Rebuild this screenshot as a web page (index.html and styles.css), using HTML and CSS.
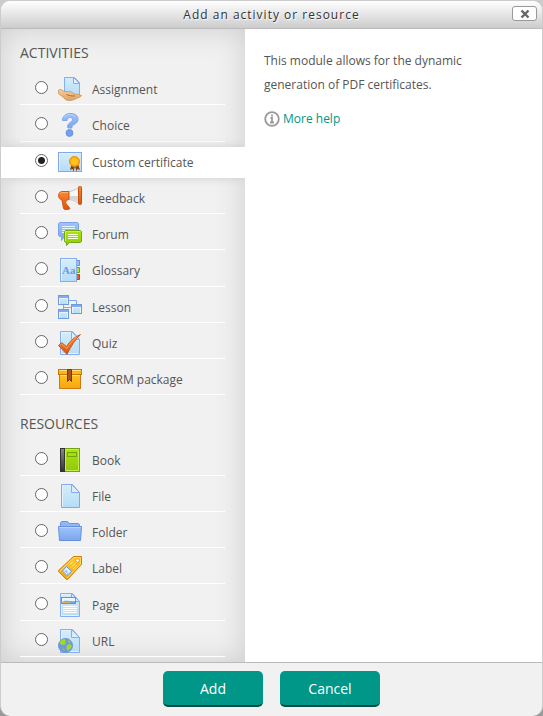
FILE: index.html
```html
<!DOCTYPE html>
<html lang="en">
<head>
  <meta charset="UTF-8">
  <meta name="viewport" content="width=device-width, initial-scale=1.0">
  <title>Add an activity or resource</title>
  <link rel="stylesheet" href="styles.css">
</head>
<body>
  <!-- Shared gradients and the sheet of paper used by several icons -->
  <svg class="defs" aria-hidden="true">
    <defs>
      <linearGradient id="paper" x1="0" y1="0" x2="0" y2="1">
        <stop offset="0" stop-color="#d6edfa"/><stop offset="1" stop-color="#b5dcf7"/>
      </linearGradient>
      <linearGradient id="blue" x1="0" y1="0" x2="0" y2="1">
        <stop offset="0" stop-color="#9fc4fa"/><stop offset="1" stop-color="#7ca5ee"/>
      </linearGradient>
      <linearGradient id="orange" x1="0" y1="0" x2="0" y2="1">
        <stop offset="0" stop-color="#f98a35"/><stop offset="1" stop-color="#d9540c"/>
      </linearGradient>
      <linearGradient id="yellow" x1="0" y1="0" x2="0" y2="1">
        <stop offset="0" stop-color="#ffc61c"/><stop offset="1" stop-color="#f8a510"/>
      </linearGradient>
      <linearGradient id="green" x1="0" y1="0" x2="0" y2="1">
        <stop offset="0" stop-color="#b1e30d"/><stop offset="1" stop-color="#8fc80e"/>
      </linearGradient>
      <linearGradient id="skin" x1="0" y1="0" x2="0" y2="1">
        <stop offset="0" stop-color="#f5cf9c"/><stop offset="1" stop-color="#dfa064"/>
      </linearGradient>
      <linearGradient id="spine" x1="0" y1="0" x2="0" y2="1">
        <stop offset="0" stop-color="#888"/><stop offset="1" stop-color="#333"/>
      </linearGradient>
      <g id="sheet">
        <path d="M2.5.5h12l7 8v15h-19z" fill="url(#paper)" stroke="#85adf0"/>
        <path d="M3.5 1.5h10M3.5 1.5v21h17" fill="none" stroke="#e2f3fd"/>
        <path d="M13.5.5v8h8z" fill="#d9edfc" stroke="#85adf0"/>
      </g>
    </defs>
  </svg>

  <div class="dialog" role="dialog" aria-labelledby="dialog-title">
    <header class="dialog-header">
      <h1 id="dialog-title">Add an activity or resource</h1>
      <button type="button" class="close" aria-label="Close">
        <svg width="10" height="10" viewBox="0 0 10 10"><path d="M1.5 1.5l7 7M8.5 1.5l-7 7" stroke="#666" stroke-width="2.4"/></svg>
      </button>
    </header>

    <form class="chooser">
      <div class="columns">
        <div class="options">
          <h2>ACTIVITIES</h2>
          <label class="option">
            <input type="radio" name="module">
            <svg class="icon" viewBox="0 0 24 24">
              <path d="M6.5.5h10l5 5v13h-15z" fill="url(#paper)" stroke="#85adf0"/>
              <path d="M15.5.5v6h6z" fill="#e4f3fd" stroke="#85adf0"/>
              <path d="M.5 13c1-1 3-.5 5 1 1.500 1 3 .5 5 .5 3 0 4 1 5.500 2.500 2.500.3 3.500 0 7.500 1.500-1 2-3.500 2-5 3-3 1.500-5 2-7.500 2s-4-1-5-2.500-3-2-5.500-4.500z" fill="url(#skin)" stroke="#c98b4c" stroke-width=".7"/>
              <path d="M8.500 17.500c3 1.500 5.500 1.500 8.500 1.500" fill="none" stroke="#a86d35"/>
            </svg>
            <span>Assignment</span>
          </label>
          <label class="option">
            <input type="radio" name="module">
            <svg class="icon" viewBox="0 0 24 24">
              <path d="M4.500 7.500C4.500 3 8 .5 12.500.5s7.500 2 7.500 6c0 5-7.500 5-6 8.500h-4c-2-5 4.500-5.500 4.500-8.500 0-3-5-3-5.500 1z" fill="url(#blue)" stroke="#7fa6ea"/>
              <path d="M6 4.500c2-3.500 9.500-4 11.500-.5" fill="none" stroke="#bdd6fb"/>
              <circle cx="11.500" cy="20" r="3.400" fill="#779fee" stroke="#6890e0"/>
            </svg>
            <span>Choice</span>
          </label>
          <label class="option">
            <input type="radio" name="module" checked>
            <svg class="icon" viewBox="0 0 24 24">
              <rect x=".5" y="2.500" width="23" height="19" fill="url(#paper)" stroke="#7fa8ee"/>
              <path d="M1.500 20.500v-17h21" fill="none" stroke="#e0f2fd"/>
              <path d="M13.500 14l-1.500 6 2.500-1 1 2.500 1.500-5 1.500 5 1-2.500 2.500 1-2-6z" fill="#8a4212"/>
              <circle cx="16.500" cy="11.500" r="5" fill="#f8a914" stroke="#e8900c"/>
              <circle cx="16.500" cy="11.500" r="3.500" fill="#ffc31b"/>
            </svg>
            <span>Custom certificate</span>
          </label>
          <label class="option">
            <input type="radio" name="module">
            <svg class="icon" viewBox="0 0 24 24">
              <path d="M10 5.500c4 0 7-1.500 10.500-4v16C17 14.500 14 13.500 10 13.500z" fill="#f8f8f8" stroke="#c4c4c4"/>
              <path d="M11 10h9v6c-3-2-5-3-9-3z" fill="#d6d6d6"/>
              <path d="M3.500 5.500H11v8c-3 .5-3.500 2-3 4l4 5c-1 1.500-6 1.500-6.500 0L4 14C-.5 13-.5 6.500 3.500 5.500z" fill="url(#orange)" stroke="#d2560f"/>
              <path d="M2 8c.5-1.500 1.500-1.500 3-1.500h5" fill="none" stroke="#ffb071"/>
              <rect x="20.500" y=".5" width="3" height="18" rx="1" fill="url(#orange)" stroke="#c9500d"/>
            </svg>
            <span>Feedback</span>
          </label>
          <label class="option">
            <input type="radio" name="module">
            <svg class="icon" viewBox="0 0 24 24">
              <path d="M1.500.5h18l1 1v12l-1 1h-13l-3 4v-4h-2l-1-1v-12z" fill="url(#blue)" stroke="#7ba3ea"/>
              <path d="M4 4.500h13M4 6.500h13M4 8.500h3M4 10.500h3" stroke="#e5f2ff"/>
              <path d="M7.500 8.500h15l1 1v10l-1 1h-11l-3 3v-3h-1l-1-1v-10z" fill="url(#green)" stroke="#72a71a"/>
              <path d="M7.500 19V9.500h15" fill="none" stroke="#c8ed55"/>
              <path d="M10 12.500h10M10 14.500h10M10 16.500h10" stroke="#f5ffdc"/>
            </svg>
            <span>Forum</span>
          </label>
          <label class="option">
            <input type="radio" name="module">
            <svg class="icon" viewBox="0 0 24 24">
              <path d="M17 2.500h4.500v5H17z" fill="#97bef7" stroke="#688fd8"/>
              <path d="M17 9.500h4.500v5H17z" fill="#afdf2a" stroke="#71a612"/>
              <path d="M17 16.500h4.500v5H17z" fill="#ec6519" stroke="#bd460a"/>
              <rect x="2.500" y=".5" width="16" height="23" fill="url(#paper)" stroke="#82adf1"/>
              <path d="M3.500 22.500v-21h14" fill="none" stroke="#e5f4fd"/>
              <text x="4" y="16" class="glyphs">Aa</text>
            </svg>
            <span>Glossary</span>
          </label>
          <label class="option">
            <input type="radio" name="module">
            <svg class="icon" viewBox="0 0 24 24">
              <path d="M5.500 9v6M10 5.500h8.500V10M5.500 12.500H14" fill="none" stroke="#80a9ef"/>
              <g fill="url(#paper)" stroke="#7099df">
                <rect x=".5" y=".5" width="10" height="9"/>
                <rect x=".5" y="14.500" width="10" height="9"/>
                <rect x="13.500" y="9.500" width="10" height="9"/>
              </g>
              <path d="M1 2h9M1 16h9M14 11h9" stroke="#83abf0" stroke-width="2"/>
              <path d="M1.500 9V3.500h8V9M1.500 23v-5.500h8V23M14.500 18v-5.500h8V18" fill="none" stroke="#e8f5ff"/>
            </svg>
            <span>Lesson</span>
          </label>
          <label class="option">
            <input type="radio" name="module">
            <svg class="icon" viewBox="0 0 24 24">
              <use href="#sheet"/>
              <path d="M.5 14.500l3-3 5 4C12 10 16 6 22.500 3.500 17 9 13 15 9 23.500z" fill="url(#orange)" stroke="#c54b0b" stroke-width=".8"/>
              <path d="M2 14.500l1.500-1.500L9 17.500C12 12 15 8.500 19 6" fill="none" stroke="#ff9e5b"/>
            </svg>
            <span>Quiz</span>
          </label>
          <label class="option">
            <input type="radio" name="module">
            <svg class="icon" viewBox="0 0 24 24">
              <rect x="1.500" y="6.500" width="21" height="15" fill="url(#yellow)" stroke="#cf7a0c"/>
              <rect x=".5" y="2.500" width="23" height="5" fill="#fdb515" stroke="#c97508"/>
              <path d="M1.500 3.500h21M2.500 8.500h19" stroke="#ffe070"/>
              <path d="M9.500 2.500h4v12l-2-2-2 2z" fill="#a4571e" stroke="#77370c"/>
            </svg>
            <span>SCORM package</span>
          </label>

          <h2 class="next">RESOURCES</h2>
          <label class="option">
            <input type="radio" name="module">
            <svg class="icon" viewBox="0 0 24 24">
              <rect x="5.500" y=".5" width="16" height="23" fill="url(#green)" stroke="#71a50c"/>
              <path d="M7.500 22.500v-21h13v21z" fill="none" stroke="#c5ee4b"/>
              <rect x="2.500" y=".5" width="4" height="23" fill="url(#spine)" stroke="#333"/>
              <rect x="9.500" y="4.500" width="9" height="4" fill="#a6db10" stroke="#71a50c"/>
            </svg>
            <span>Book</span>
          </label>
          <label class="option">
            <input type="radio" name="module">
            <svg class="icon" viewBox="0 0 24 24">
              <path d="M3.500.5h11l7 8v15h-18z" fill="url(#paper)" stroke="#80a8ed"/>
              <path d="M4.500 22.500v-21h9" fill="none" stroke="#e2f3fd"/>
              <path d="M13.500.5v8h8z" fill="#d9edfc" stroke="#85adf0"/>
            </svg>
            <span>File</span>
          </label>
          <label class="option">
            <input type="radio" name="module">
            <svg class="icon" viewBox="0 0 24 24">
              <path d="M2.500 10V2.500l1-1h6l2 2h9l1 1V10z" fill="#8fb8f6" stroke="#6c95de"/>
              <path d="M.5 6.500h23l-1 14h-21z" fill="url(#blue)" stroke="#6791de"/>
              <path d="M1.500 7.500h21" stroke="#b8d5fc"/>
            </svg>
            <span>Folder</span>
          </label>
          <label class="option">
            <input type="radio" name="module">
            <svg class="icon" viewBox="0 0 24 24">
              <path d="M15.500.5h8v8l-14 15h-1l-8-8v-1z" fill="url(#yellow)" stroke="#d2780c"/>
              <path d="M2 15L16 1.500h6.500V8L9 22" fill="none" stroke="#ffdb5c"/>
              <path d="M8.500 10.500l5 5-4.500 4-4.500-4.500z" fill="#e6f2ff" stroke="#6a9be6"/>
              <path d="M6 15l3-1 1 4" fill="#98bef3"/>
              <path d="M11 9.500l4-4M13 11.500l5-5M15 13l4-4" stroke="#fff0b4"/>
              <circle cx="19.500" cy="4.500" r="1.700" fill="#fff" stroke="#d2780c" stroke-width=".6"/>
            </svg>
            <span>Label</span>
          </label>
          <label class="option">
            <input type="radio" name="module">
            <svg class="icon" viewBox="0 0 24 24">
              <use href="#sheet"/>
              <rect x="3.500" y="4.500" width="14" height="6" fill="#e8f6ff" stroke="#668fda"/>
              <path d="M4 9c4-3 8 0 13-1v2H4z" fill="#74a5e5"/>
              <path d="M4 9.500h8" stroke="#d9b36a"/>
              <path d="M5 13.500h14M5 15.500h14M5 17.500h14M5 19.500h14" stroke="#fff"/>
            </svg>
            <span>Page</span>
          </label>
          <label class="option">
            <input type="radio" name="module">
            <svg class="icon" viewBox="0 0 24 24">
              <use href="#sheet"/>
              <circle cx="7.500" cy="16.500" r="7" fill="#6e98e0" stroke="#6f93d2"/>
              <path d="M3 11.500l3-1.500 2 1-1 2 1 1-2 2-3-.5-1.500-2zM9 16l3-1 2 2-2 3-2.500 2-1-3zM10 11l3 2-2 1zM4 19l2 1 .5 2z" fill="#a4dc16"/>
            </svg>
            <span>URL</span>
          </label>
        </div>

        <div class="summary">
          <p>This module allows for the dynamic generation of PDF certificates.</p>
          <a href="#" class="help">
            <svg width="16" height="16" viewBox="0 0 16 16">
              <circle cx="8" cy="8" r="6.800" fill="#fff" stroke="#999" stroke-width="1.800"/>
              <path d="M8 3.500v2M6.500 7H8v4M6 11.500h4" fill="none" stroke="#999" stroke-width="1.800"/>
            </svg>
            More help
          </a>
        </div>
      </div>

      <footer class="actions">
        <button type="submit" class="button">Add</button>
        <button type="button" class="button">Cancel</button>
      </footer>
    </form>
  </div>
</body>
</html>
```

FILE: styles.css
```css
* {
  box-sizing: border-box;
}
body {
  margin: 0;
  font-family: "Open Sans", sans-serif;
  font-size: 12px;
  color: #555;
  background: linear-gradient(#ccc, #999);
}
.defs {
  position: absolute;
  width: 0;
  height: 0;
}
.dialog {
  display: flex;
  flex-direction: column;
  min-height: 100vh;
  border: 1px solid #ccc;
  border-bottom: 0;
  border-radius: 10px;
  background: #f1f1f1;
  overflow: hidden;
}

/* Title bar */
.dialog-header {
  position: relative;
  height: 28px;
  border-bottom: 1px solid #bbb;
  background: linear-gradient(#fff, #ccc);
}
.dialog-header h1 {
  margin: 0;
  font-size: 12px;
  font-weight: normal;
  line-height: 27px;
  letter-spacing: 1px;
  text-align: center;
  color: #333;
  text-shadow: 1px 1px 1px #fff;
}
.close {
  position: absolute;
  top: 5px;
  right: 5px;
  display: flex;
  align-items: center;
  justify-content: center;
  width: 25px;
  height: 15px;
  padding: 0;
  border: 1px solid #999;
  border-radius: 3px;
  background: #fff;
  cursor: pointer;
}

/* Module list and description */
.chooser {
  flex: 1;
  display: flex;
  flex-direction: column;
}
.columns {
  flex: 1;
  display: flex;
}
.options {
  display: flex;
  flex-direction: column;
  width: 244px;
  padding-bottom: 5px;
  background: #f1f1f1;
  box-shadow: inset 0 0 30px #ccc;
}
.options h2 {
  height: 40px;
  margin: 0;
  padding: 0 19px;
  font-size: 14px;
  font-weight: normal;
  line-height: 48px;
}
.options .next {
  height: 44px;
  line-height: 58px;
}
.option {
  flex: 1 0 31px;
  display: flex;
  align-items: center;
  margin: 5px 20px 0 19px;
  padding-left: 15px;
  border-bottom: 1px solid #fff;
  cursor: pointer;
}
.option:has(input:checked) {
  margin: 5px 0 0;
  padding-left: 34px;
  background: #fff;
  box-shadow: 0 0 10px #ccc;
  clip-path: inset(-10px 0);
}
.option input {
  appearance: none;
  width: 13px;
  height: 13px;
  margin: 0 10px 3px 0;
  border: 1px solid #666;
  border-radius: 50%;
  background: #fff;
}
.option input:checked {
  background: radial-gradient(circle, #222 3px, #fff 4px);
}
.icon {
  width: 24px;
  height: 24px;
  margin-right: 10px;
}
.option span {
  padding-top: 1px;
}
.glyphs {
  font: bold 11px "Liberation Serif", serif;
  fill: #6f99df;
}
.summary {
  flex: 1;
  padding: 20px 19px;
  background: #fff;
  line-height: 24px;
}
.summary p {
  max-width: 240px;
  margin: 0 0 10px;
}
.help {
  display: inline-flex;
  align-items: center;
  gap: 3px;
  color: #009688;
  text-decoration: none;
}

/* Buttons */
.actions {
  display: flex;
  justify-content: center;
  gap: 17px;
  padding: 8px 0 9px;
  border-top: 1px solid #bbb;
}
.button {
  width: 100px;
  height: 36px;
  padding: 0;
  border: 0;
  border-bottom: 2px solid #004d46;
  border-radius: 5px;
  background: #009688;
  color: #fff;
  font-family: inherit;
  font-size: 14px;
  cursor: pointer;
}
```
